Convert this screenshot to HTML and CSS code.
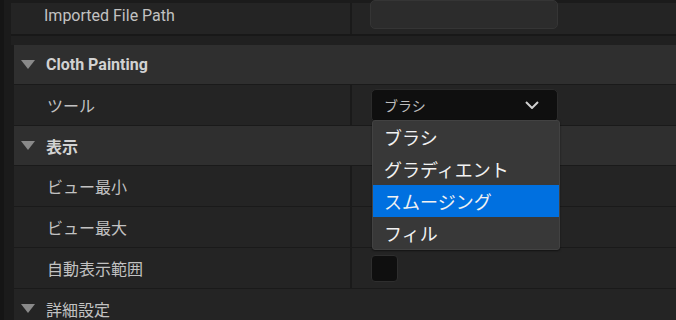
FILE: index.html
```html
<!DOCTYPE html>
<html lang="ja">
<head>
  <meta charset="UTF-8">
  <title>Details</title>
  <link rel="stylesheet" href="styles.css">
</head>
<body>
  <div class="panel">

    <!-- 上の行 (一部だけ見えている) -->
    <div class="row top-row">
      <div class="name">Imported File Path</div>
      <div class="value"><div class="textbox"></div></div>
    </div>
    <div class="gap"></div>

    <!-- Cloth Painting -->
    <div class="section">
      <div class="header"><span class="arrow"></span>Cloth Painting</div>
      <div class="row">
        <div class="name">ツール</div>
        <div class="value">
          <div class="combo">
            <span>ブラシ</span>
            <svg class="chevron" width="14" height="8" viewBox="0 0 14 8">
              <path d="M1 1 L7 7 L13 1" fill="none" stroke="#cfcfcf" stroke-width="2"/>
            </svg>
          </div>
        </div>
      </div>

      <div class="header"><span class="arrow"></span>表示</div>
      <div class="row">
        <div class="name">ビュー最小</div>
        <div class="value"></div>
      </div>
      <div class="row">
        <div class="name">ビュー最大</div>
        <div class="value"></div>
      </div>
      <div class="row">
        <div class="name">自動表示範囲</div>
        <div class="value"><div class="checkbox"></div></div>
      </div>

      <div class="header collapsed"><span class="arrow"></span>詳細設定</div>
    </div>

    <!-- ドロップダウン -->
    <ul class="menu">
      <li>ブラシ</li>
      <li>グラディエント</li>
      <li class="selected">スムージング</li>
      <li>フィル</li>
    </ul>
  </div>
</body>
</html>
```

FILE: styles.css
```css
* { margin: 0; padding: 0; box-sizing: border-box; }

body {
  background: #1b1b1b;
  font-family: Roboto, "Noto Sans CJK JP", sans-serif;
  color: #c2c2c2;
  width: 676px;
  height: 320px;
  overflow: hidden;
  border-left: 4px solid #151515;
}

.panel {
  position: relative;
  padding-top: 3px;
}

.row {
  display: flex;
  height: 41px;
  background: #242424;
  border-bottom: 1px solid #1a1a1a;
}

.row .name {
  width: 338px;
  padding-left: 33px;
  display: flex;
  align-items: center;
  font-size: 16px;
  border-right: 2px solid #1a1a1a;
}

.row .value {
  flex: 1;
  padding-left: 19px;
  display: flex;
  align-items: center;
}

.top-row {
  margin-left: 7px;
  height: 33px;
  border-bottom: 2px solid #181818;
}

.top-row .name {
  width: 341px;
  padding-left: 33px;
  font-size: 16px;
  align-items: flex-start;
  padding-top: 3px;
}

.top-row .value { align-items: flex-start; padding-left: 18px; }

.textbox {
  width: 188px;
  height: 29px;
  margin-top: -3px;
  background: #2c2c2c;
  border: 1px solid #353535;
  border-radius: 5px;
}

.gap { height: 9px; background: #202020; margin-left: 7px; }

.section { margin-left: 10px; }

.header {
  display: flex;
  align-items: center;
  height: 40px;
  background: #2f2f2f;
  border-bottom: 1px solid #1a1a1a;
  font-size: 16px;
  font-weight: bold;
  color: #d2d2d2;
}

.header.collapsed {
  background: #242424;
  font-weight: normal;
  color: #c2c2c2;
}

.arrow {
  width: 0;
  height: 0;
  margin-left: 7px;
  margin-right: 11px;
  border-left: 7.5px solid transparent;
  border-right: 7.5px solid transparent;
  border-top: 9px solid #8a8a8a;
}

.combo {
  width: 187px;
  height: 33px;
  background: #0f0f0f;
  border: 1px solid #2b2b2b;
  border-radius: 5px;
  display: flex;
  align-items: center;
  justify-content: space-between;
  padding: 0 18px 0 12px;
  font-size: 14px;
  color: #bdbdbd;
}

.checkbox {
  width: 27px;
  height: 27px;
  background: #0f0f0f;
  border: 1px solid #2e2e2e;
  border-radius: 4px;
}

.menu {
  position: absolute;
  left: 368px;
  top: 120px;
  width: 188px;
  list-style: none;
  background: #383838;
  border: 1px solid #424242;
  border-radius: 3px;
  box-shadow: 0 1px 2px rgba(0,0,0,0.5);
}

.menu li {
  height: 32px;
  padding-left: 11px;
  display: flex;
  align-items: center;
  font-size: 18px;
  color: #f2f2f2;
}

.menu li.selected { background: #0070e0; }
```
